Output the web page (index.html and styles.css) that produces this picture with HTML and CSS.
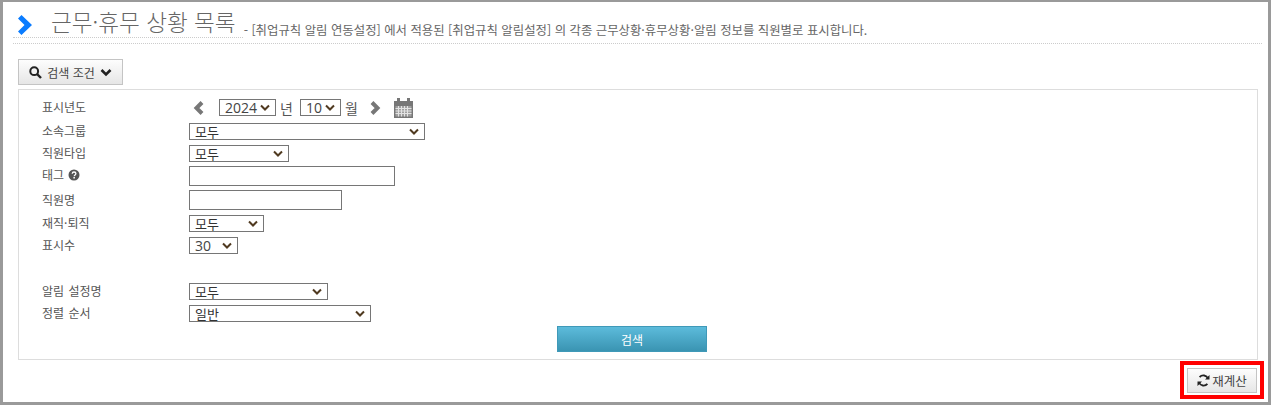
FILE: index.html
```html
<!DOCTYPE html>
<html lang="ko">
  <head>
    <meta charset="UTF-8" />
    <meta name="viewport" content="width=device-width, initial-scale=1.0" />
    <title>근무·휴무 상황 목록</title>
    <link rel="stylesheet" href="styles.css">
  </head>
  <body>
    <div class="frame">
      <div class="title-bar">
        <div class="title-head">
          <svg class="title-arrow" width="15" height="20" viewBox="0 0 15 20">
            <path d="M0 3.500L3.500 0 14 10 3.500 20 0 16.500 6.500 10z" fill="#0a7cff" />
          </svg>
          <h1>근무·휴무 상황 목록</h1>
        </div>
        <p class="title-desc">- [취업규칙 알림 연동설정] 에서 적용된 [취업규칙 알림설정] 의 각종 근무상황·휴무상황·알림 정보를 직원별로 표시합니다.</p>
      </div>

      <button class="btn toggle-btn" type="button">
        <svg width="13" height="13" viewBox="0 0 13 13">
          <circle cx="5.2" cy="5.2" r="3.9" fill="none" stroke="#222" stroke-width="2" />
          <path d="M8 8l4 4" stroke="#222" stroke-width="2.400" />
        </svg>
        검색 조건
        <svg width="12" height="9" viewBox="0 0 12 9">
          <path d="M1.500 2l4.500 4.500L10.500 2" fill="none" stroke="#222" stroke-width="2.600" />
        </svg>
      </button>

      <form class="panel">
        <div class="row row-date">
          <label>표시년도</label>
          <div class="date-nav">
            <svg class="nav-prev" width="11" height="14" viewBox="0 0 11 14">
              <path d="M9 1.500L3.500 7 9 12.500" fill="none" stroke="#777" stroke-width="4" />
            </svg>
            <select class="num w-year"><option>2024</option></select>
            <span>년</span>
            <select class="num w-month"><option>10</option></select>
            <span>월</span>
            <svg class="nav-next" width="11" height="14" viewBox="0 0 11 14">
              <path d="M2 1.500L7.500 7 2 12.500" fill="none" stroke="#777" stroke-width="4" />
            </svg>
            <svg class="cal" width="19" height="20" viewBox="0 0 19 20">
              <path d="M0 3h3V0h3v3h7V0h3v3h3v17H0z" fill="#777" />
              <path d="M1.500 8h16v10.500h-16z" fill="#a0a0a0" />
              <path d="M1.500 10.500h16M1.500 13h16M1.500 15.500h16M4.500 8v10.500M7.500 8v10.500M10.500 8v10.500M13.500 8v10.500" stroke="#e4e4e4" stroke-width="1" />
            </svg>
          </div>
        </div>
        <div class="row">
          <label>소속그룹</label>
          <select class="w-group"><option>모두</option></select>
        </div>
        <div class="row row-tight">
          <label>직원타입</label>
          <select class="w-type"><option>모두</option></select>
        </div>
        <div class="row row-input">
          <label>태그
            <svg width="12" height="12" viewBox="0 0 12 12">
              <circle cx="6" cy="6" r="5.500" fill="#555" />
              <path d="M4.200 4.700C4.300 3.600 5 3 6 3s1.900.6 1.900 1.600c0 1.300-1.700 1.300-1.700 2.600" fill="none" stroke="#fff" stroke-width="1.300" />
              <path d="M5.400 8h1.500v1.400H5.400z" fill="#fff" />
            </svg>
          </label>
          <input class="w-tag" type="text" />
        </div>
        <div class="row row-input-wide">
          <label>직원명</label>
          <input class="w-name" type="text" />
        </div>
        <div class="row">
          <label>재직·퇴직</label>
          <select class="w-status"><option>모두</option></select>
        </div>
        <div class="row row-gap">
          <label>표시수</label>
          <select class="num w-count"><option>30</option></select>
        </div>
        <div class="row">
          <label>알림 설정명</label>
          <select class="w-alarm"><option>모두</option></select>
        </div>
        <div class="row">
          <label>정렬 순서</label>
          <select class="w-sort"><option>일반</option></select>
        </div>
        <div class="submit-row">
          <button class="search-btn" type="button">검색</button>
        </div>
      </form>

      <div class="footer">
        <div class="highlight">
          <button class="btn recalc-btn" type="button">
            <svg width="13" height="13" viewBox="0 0 13 13">
              <path d="M11 4.500A5 5 0 0 0 2.600 3.200M2 8.500a5 5 0 0 0 8.400 1.300" fill="none" stroke="#222" stroke-width="1.800" />
              <path d="M12.500 1v4.500H8zM.5 12V7.500H5z" fill="#222" />
            </svg>
            재계산
          </button>
        </div>
      </div>
    </div>
  </body>
</html>
```

FILE: styles.css
```css
* {
  margin: 0;
  padding: 0;
  box-sizing: border-box;
}

body {
  font-family: "Noto Sans CJK KR", "Noto Sans", sans-serif;
  font-size: 12px;
  color: #555;
  background-color: #ffffff;
  height: 100vh;
  overflow: hidden;
}

.frame {
  width: 1271px;
  height: 405px;
  padding: 0 10px 0 15px;
  border: 3px solid #9a9a9a;
  border-top-width: 2px;
}

.title-bar {
  display: flex;
  align-items: flex-start;
  height: 42px;
  margin-left: -5px;
  margin-right: -4px;
  border-bottom: 1px dotted #ccc;
  white-space: nowrap;
}

.title-head {
  display: flex;
  align-items: flex-end;
  height: 36px;
  padding-left: 5px;
  padding-right: 7px;
  border-bottom: 1px dotted #ccc;
}

.title-arrow {
  align-self: flex-start;
  margin-top: 13px;
}

h1 {
  margin-left: 18px;
  font-size: 22.600px;
  line-height: 30px;
  font-weight: 300;
  color: #666;
}

.title-desc {
  margin-left: 1px;
  margin-top: 19px;
  font-size: 12.400px;
  line-height: 18px;
  color: #666;
}

.btn {
  display: flex;
  align-items: center;
  justify-content: center;
  font-family: inherit;
  font-size: 12px;
  color: #444;
  background: linear-gradient(#fdfdfd, #e6e6e6);
  border: 1px solid #c4c4c4;
}

.toggle-btn {
  gap: 5px;
  width: 105px;
  height: 26px;
  margin-top: 15px;
}

.panel {
  height: 271px;
  margin-top: 4px;
  padding: 9px 0 0 23px;
  border: 1px solid #ddd;
}

.row {
  display: flex;
  align-items: flex-start;
  height: 22px;
}

.row label {
  display: flex;
  align-items: center;
  gap: 4px;
  width: 147px;
  margin-top: -1px;
  font-size: 12px;
  line-height: 17px;
  word-spacing: 1px;
  color: #555;
}

.row-date {
  height: 24px;
}

.row-tight {
  height: 21px;
}

.row-input {
  height: 24px;
}

.row-input-wide {
  height: 25px;
}

.row-input label {
  margin-top: 0;
}

.row-input-wide label {
  margin-top: 1px;
}

.row-gap {
  height: 46px;
}

.date-nav {
  display: flex;
  align-items: center;
  height: 17px;
  font-size: 14px;
}

.date-nav span {
  margin-left: 4px;
}

.nav-prev {
  margin-left: 4px;
  margin-right: 15px;
}

.nav-next {
  margin-left: 12px;
}

.cal {
  margin-left: 13px;
}

select {
  display: block;
  height: 17px;
  padding: 0 16px 0 5px;
  font-family: inherit;
  font-size: 13px;
  line-height: 15px;
  color: #333;
  background: #fff url("data:image/svg+xml,%3Csvg xmlns='http://www.w3.org/2000/svg' width='10' height='7'%3E%3Cpath d='M1 1.500l4 4 4-4' fill='none' stroke='%23503a20' stroke-width='2'/%3E%3C/svg%3E") no-repeat right 5px center;
  border: 1px solid #767676;
  border-radius: 0;
  appearance: none;
}

select.num {
  font-family: "Open Sans", sans-serif;
  font-size: 14px;
  color: #444;
}

input[type="text"] {
  display: block;
  height: 20px;
  background: #fff;
  border: 1px solid #767676;
}

.w-year { width: 57px; }
.w-month { width: 41px; margin-left: 7px; }
.w-group { width: 236px; }
.w-type { width: 100px; }
.w-tag { width: 206px; }
.w-name { width: 153px; }
.w-status { width: 75px; }
.w-count { width: 49px; }
.w-alarm { width: 139px; }
.w-sort { width: 182px; }

.submit-row {
  display: flex;
  justify-content: center;
  margin-left: -35px;
  margin-top: -1px;
}

.search-btn {
  width: 150px;
  height: 26px;
  font-family: inherit;
  font-size: 12px;
  color: #fff;
  background: linear-gradient(#5cbbdb, #3a94b2);
  border: 1px solid #3f99b8;
}

.footer {
  display: flex;
  justify-content: flex-end;
  margin-right: -6px;
  margin-top: 1px;
}

.highlight {
  padding: 3px 3px 2px 3px;
  border: 4px solid #ff0000;
}

.recalc-btn {
  gap: 2px;
  width: 70px;
  height: 25px;
  font-size: 12.500px;
}
```
